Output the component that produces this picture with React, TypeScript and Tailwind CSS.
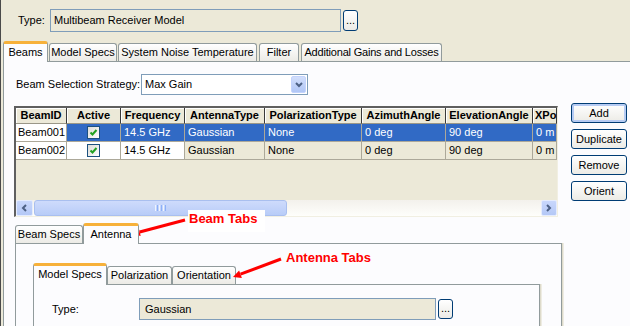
import clsx from "clsx";
import type { ReactNode } from "react";

function XpButton({
  children,
  className,
  focused = false,
}: {
  children: ReactNode;
  className?: string;
  focused?: boolean;
}) {
  return (
    <div
      className={clsx(
        "flex shrink-0 items-center justify-center rounded-[3px] border border-[#003C74] bg-linear-to-b from-white to-[#ECEBE6] text-black",
        focused && "shadow-[inset_0_0_0_2px_#B6CBF3]",
        className
      )}
    >
      {children}
    </div>
  );
}

function Tab({
  label,
  selected = false,
  className,
}: {
  label: string;
  selected?: boolean;
  className?: string;
}) {
  if (selected) {
    return (
      <div
        className={clsx(
          "relative z-10 -mb-px flex shrink-0 items-center justify-center whitespace-nowrap rounded-t-[3px] border-x border-t-[3px] border-x-[#919B9C] border-t-[#F7B13A] bg-[#FCFCFE] pb-[2px]",
          className
        )}
      >
        {label}
      </div>
    );
  }
  return (
    <div
      className={clsx(
        "flex h-[18px] shrink-0 items-center justify-center whitespace-nowrap rounded-t-[3px] border border-b-0 border-[#919B9C] bg-linear-to-b from-white to-[#ECEBE6]",
        className
      )}
    >
      {label}
    </div>
  );
}

function Check() {
  return (
    <div className="flex h-[13px] w-[13px] items-center justify-center border border-[#1C5180] bg-linear-to-br from-[#DCDCD7] to-white">
      <svg width="9" height="9" viewBox="0 0 9 9">
        <path d="M1.5 4.5 L3.5 6.5 L7.5 2" fill="none" stroke="#21A121" strokeWidth="2" />
      </svg>
    </div>
  );
}

const COLS = [
  { name: "BeamID", w: "w-[51px]" },
  { name: "Active", w: "w-[54px]" },
  { name: "Frequency", w: "w-[64px]" },
  { name: "AntennaType", w: "w-[80px]" },
  { name: "PolarizationType", w: "w-[97px]" },
  { name: "AzimuthAngle", w: "w-[84px]" },
  { name: "ElevationAngle", w: "w-[87px]" },
  { name: "XPos", w: "w-[24px] justify-start pl-[2px]" },
];

const ROWS = [
  { id: "Beam001", selected: true },
  { id: "Beam002", selected: false },
];

function GridRow({ id, selected }: { id: string; selected: boolean }) {
  const values = ["14.5 GHz", "Gaussian", "None", "0 deg", "90 deg", "0 m"];
  const other = selected ? "bg-[#316AC5] text-white" : "bg-[#ECE9D8]";
  return (
    <div className="flex h-[18px]">
      <div className={clsx(COLS[0].w, "flex shrink-0 items-center border-r border-b border-[#ACA899] bg-white pl-[2px]")}>
        {id}
      </div>
      <div
        className={clsx(
          COLS[1].w,
          "flex shrink-0 items-center justify-center border-r border-b border-[#ACA899]",
          selected ? "bg-[#316AC5]" : "bg-white"
        )}
      >
        <Check />
      </div>
      {values.map((v, i) => (
        <div
          key={i}
          className={clsx(
            COLS[i + 2].w,
            "flex shrink-0 items-center overflow-hidden whitespace-nowrap border-r border-b border-[#ACA899] pl-[3px]",
            i === 0 && !selected ? "bg-white" : other
          )}
        >
          {v}
        </div>
      ))}
    </div>
  );
}

function Chevron({ dir }: { dir: "left" | "right" | "down" }) {
  const d =
    dir === "left" ? "M5 1 L2 4 L5 7" : dir === "right" ? "M2 1 L5 4 L2 7" : "M1 2 L4 5 L7 2";
  return (
    <svg width="8" height="8" viewBox="0 0 8 8">
      <path d={d} fill="none" stroke="#4D6185" strokeWidth="2" />
    </svg>
  );
}

export default function App() {
  return (
    <div className="relative flex h-[326px] w-[630px] overflow-hidden bg-[#ECE9D8] font-['Liberation_Sans',Arial,sans-serif] text-[11px] leading-none text-black">
      <div className="w-px shrink-0 bg-[#4a4a4a]" />
      <div className="flex min-w-0 flex-1 flex-col">
        {/* Type row */}
        <div className="flex h-[41px] shrink-0 items-start pt-[9px] pl-[17px]">
          <div className="flex h-[23px] w-[32px] items-center">Type:</div>
          <div className="flex h-[23px] w-[291px] items-center border border-[#7F9DB9] pl-[3px]">
            Multibeam Receiver Model
          </div>
          <XpButton className="mt-px ml-[2px] h-[21px] w-[15px] items-end pb-[4px]">...</XpButton>
        </div>

        {/* top tabs */}
        <div className="flex h-[20px] shrink-0 items-end pl-[2px]">
          <Tab label="Beams" selected className="h-[21px] w-[45px]" />
          <Tab label="Model Specs" className="ml-px w-[68px]" />
          <Tab label="System Noise Temperature" className="ml-px w-[139px]" />
          <Tab label="Filter" className="ml-[2px] w-[40px]" />
          <Tab label="Additional Gains and Losses" className="ml-[2px] w-[141px] tracking-[-0.2px]" />
        </div>

        <div className="ml-[2px] flex min-h-0 flex-1 flex-col border-t border-l border-[#919B9C] bg-[#FCFCFE]">
          {/* strategy */}
          <div className="mt-[12px] flex h-[21px] shrink-0 items-center pl-[12px]">
            <div className="w-[125px]">Beam Selection Strategy:</div>
            <div className="flex h-[21px] w-[167px] items-center justify-between border border-[#7F9DB9] bg-white pr-px pl-[3px]">
              <span>Max Gain</span>
              <div className="flex h-[17px] w-[15px] items-center justify-center rounded-[2px] border border-[#C3D3FD] bg-linear-to-b from-[#D2DEFB] to-[#B0C6F6]">
                <Chevron dir="down" />
              </div>
            </div>
          </div>

          {/* grid + buttons */}
          <div className="mt-[8px] flex shrink-0 items-start pl-[10px]">
            <div className="mt-[3px] flex h-[111px] w-[544px] flex-col border-t-2 border-r border-b border-l-2 border-t-[#5f5f5f] border-r-[#F1EFE2] border-b-[#F1EFE2] border-l-[#5f5f5f] bg-[#ECE9D8]">
              <div className="flex h-[16px] shrink-0">
                {COLS.map((c) => (
                  <div
                    key={c.name}
                    className={clsx(
                      "flex shrink-0 items-center justify-center overflow-hidden border-r border-b border-r-[#3a3a3a] border-b-[#9a9788] bg-[#ECE9D8] font-bold whitespace-nowrap shadow-[inset_1px_1px_0_#fff]",
                      c.w
                    )}
                  >
                    {c.name}
                  </div>
                ))}
              </div>
              {ROWS.map((r) => (
                <GridRow key={r.id} id={r.id} selected={r.selected} />
              ))}
              <div className="flex-1" />
              {/* scrollbar */}
              <div className="flex h-[16px] shrink-0 bg-linear-to-b from-[#F3F1EC] to-[#FEFEFB]">
                <div className="flex w-[17px] items-center justify-center rounded-[2px] border border-[#E5ECFD] bg-linear-to-b from-[#C8D7FC] to-[#B4C8F6]">
                  <Chevron dir="left" />
                </div>
                <div className="ml-px flex w-[253px] items-center justify-center rounded-[3px] border border-[#A9BFEF] bg-linear-to-b from-[#CEDBFC] to-[#B8CCF8]">
                  <div className="flex gap-px">
                    <div className="h-[6px] w-px bg-[#EEF4FE]" />
                    <div className="h-[6px] w-px bg-[#8CB0F8]" />
                    <div className="h-[6px] w-px bg-[#EEF4FE]" />
                    <div className="h-[6px] w-px bg-[#8CB0F8]" />
                    <div className="h-[6px] w-px bg-[#EEF4FE]" />
                    <div className="h-[6px] w-px bg-[#8CB0F8]" />
                  </div>
                </div>
                <div className="flex-1" />
                <div className="flex w-[16px] items-center justify-center rounded-[2px] border border-[#E5ECFD] bg-linear-to-b from-[#C8D7FC] to-[#B4C8F6]">
                  <Chevron dir="right" />
                </div>
              </div>
            </div>

            <div className="ml-[13px] flex flex-col gap-[6px]">
              <XpButton focused className="h-[20px] w-[56px]">Add</XpButton>
              <XpButton className="h-[20px] w-[56px]">Duplicate</XpButton>
              <XpButton className="h-[20px] w-[56px]">Remove</XpButton>
              <XpButton className="h-[20px] w-[56px]">Orient</XpButton>
            </div>
          </div>

          {/* beam tabs */}
          <div className="mt-[6px] flex h-[20px] shrink-0 items-end pl-[11px]">
            <Tab label="Beam Specs" className="w-[68px]" />
            <Tab label="Antenna" selected className="h-[21px] w-[56px]" />
          </div>
          <div className="ml-[11px] flex min-h-0 w-[547px] flex-1 flex-col border-x border-t border-[#919B9C] bg-[#FCFCFE] shadow-[1px_0_0_#DEDBCB,2px_0_0_#EEECE3]">
            <div className="mt-[19px] ml-[17px] flex h-[21px] shrink-0 items-end">
              <Tab label="Model Specs" selected className="h-[22px] w-[74px]" />
              <Tab label="Polarization" className="w-[65px]" />
              <Tab label="Orientation" className="w-[64px]" />
            </div>
            <div className="ml-[17px] flex w-[507px] flex-1 flex-col border-x border-t border-[#919B9C] bg-[#FCFCFE] shadow-[1px_0_0_#DEDBCB,2px_0_0_#EEECE3]">
              <div className="mt-[13px] flex items-center pl-[18px]">
                <div className="w-[87px]">Type:</div>
                <div className="flex h-[22px] w-[297px] items-center border border-[#7F9DB9] bg-[#ECE9D8] pl-[5px]">
                  Gaussian
                </div>
                <XpButton className="ml-[2px] h-[20px] w-[15px] items-end pb-[4px]">...</XpButton>
              </div>
            </div>
          </div>
        </div>
      </div>

      {/* callouts */}
      <div className="absolute top-[210px] left-[188px] h-[22px] w-[77px] bg-white" />
      <div className="absolute top-[212px] left-[189px] text-[13px] leading-[13px] font-bold text-[#FF0000]">
        Beam Tabs
      </div>
      <div className="absolute top-[251px] left-[286px] text-[13px] leading-[13px] font-bold text-[#FF0000]">
        Antenna Tabs
      </div>
      <svg className="pointer-events-none absolute inset-0" width="630" height="326" viewBox="0 0 630 326">
        <line x1="185" y1="220" x2="139.7" y2="232" stroke="#FF0000" strokeWidth="3" />
        <polygon points="132,234 140.7,235.9 138.7,228.1" fill="#FF0000" />
        <line x1="281" y1="259" x2="240.5" y2="274.2" stroke="#FF0000" strokeWidth="3" />
        <polygon points="233,277 241.9,277.9 239.1,270.5" fill="#FF0000" />
      </svg>
    </div>
  );
}
